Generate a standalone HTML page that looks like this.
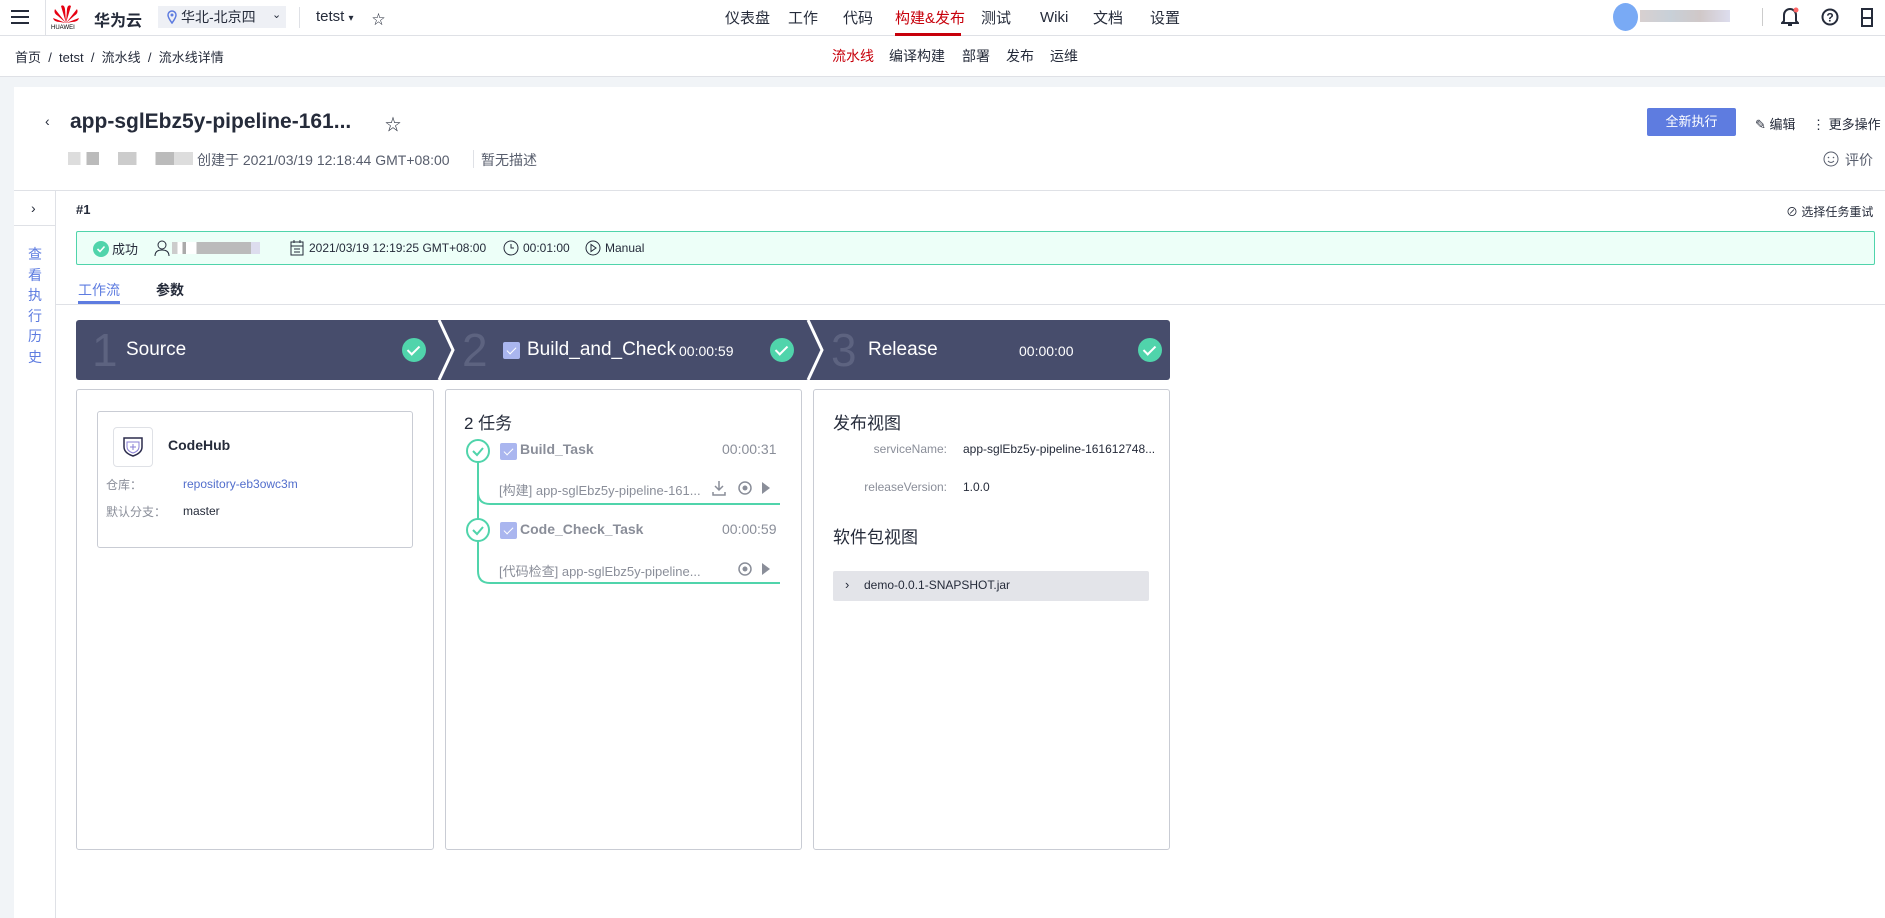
<!DOCTYPE html>
<html><head><meta charset="utf-8"><style>
*{margin:0;padding:0;box-sizing:border-box}
body{width:1885px;height:918px;overflow:hidden;background:#fff;font-family:"Liberation Sans","Noto Sans CJK SC",sans-serif;font-size:14px;color:#252b3a;position:relative}
.a{position:absolute;white-space:nowrap}
.nav{font-size:15px;color:#252b3a}
.chk{position:absolute;width:24px;height:24px;border-radius:50%;background:#50d4ab}
.chk:after{content:"";position:absolute;left:8px;top:5px;width:5px;height:10px;border:solid #fff;border-width:0 2px 2px 0;transform:rotate(45deg)}
.cb{position:absolute;width:17px;height:17px;border-radius:2px;background:#aab6ef}
.cb:after{content:"";position:absolute;left:6px;top:3px;width:4px;height:8px;border:solid #fff;border-width:0 1.5px 1.5px 0;transform:rotate(45deg)}
.panel{position:absolute;top:389px;height:461px;border:1px solid #c9ccd4;border-radius:3px;background:#fff}
.g{color:#8a8e99}
</style></head><body>
<div class="a" style="left:0;top:0;width:1885px;height:36px;border-bottom:1px solid #dfe1e6"></div>
<svg class="a" style="left:11px;top:9px" width="18" height="16"><path d="M0 2h18M0 8h18M0 14h18" stroke="#252b3a" stroke-width="2"/></svg>
<div class="a" style="left:45px;top:0;width:1px;height:36px;background:#dfe1e6"></div>
<svg class="a" style="left:52px;top:3px" width="28" height="22"><g fill="#e60012"><path d="M14 20 L9 3 Q12 1 13 6Z"/><path d="M14 20 L19 3 Q16 1 15 6Z"/><path d="M14 20 L3 6 Q1 10 6 13Z"/><path d="M14 20 L25 6 Q27 10 22 13Z"/><path d="M14 20 L1 15 Q2 19 8 19Z"/><path d="M14 20 L27 15 Q26 19 20 19Z"/></g></svg>
<div class="a" style="left:51px;top:25px;font-size:6px;color:#000">HUAWEI</div>
<div class="a" style="left:94px;top:7px;font-size:16px;font-weight:bold">华为云</div>
<div class="a" style="left:158px;top:6px;width:128px;height:22px;background:#eef0f5"></div>
<svg class="a" style="left:167px;top:10px" width="10" height="14"><path d="M5 13C2 9 1 7 1 5a4 4 0 0 1 8 0c0 2-1 4-4 8z" fill="none" stroke="#5e7ce0" stroke-width="1.5"/><circle cx="5" cy="5" r="1.5" fill="#5e7ce0"/></svg>
<div class="a" style="left:181px;top:7px;font-size:14px">华北-北京四</div>
<div class="a" style="left:272px;top:8px;font-size:11px">⌄</div>
<div class="a" style="left:299px;top:7px;width:1px;height:21px;background:#dfe1e6"></div>
<div class="a" style="left:316px;top:8px;font-size:15px">tetst <span style="font-size:10px">▾</span></div>
<div class="a" style="left:372px;top:9px;font-size:13px">☆</div>
<div class="a nav" style="left:725px;top:7px">仪表盘</div>
<div class="a nav" style="left:788px;top:7px">工作</div>
<div class="a nav" style="left:843px;top:7px">代码</div>
<div class="a nav" style="left:895px;top:7px;color:#c7000b">构建&amp;发布</div>
<div class="a" style="left:895px;top:33px;width:66px;height:3px;background:#c7000b"></div>
<div class="a nav" style="left:981px;top:7px">测试</div>
<div class="a nav" style="left:1040px;top:9px">Wiki</div>
<div class="a nav" style="left:1093px;top:7px">文档</div>
<div class="a nav" style="left:1150px;top:7px">设置</div>
<div class="a" style="left:1613px;top:3px;width:25px;height:28px;border-radius:50%;background:#79aaf5"></div>
<div class="a" style="left:1640px;top:10px;width:90px;height:12px;background:linear-gradient(90deg,#d8d0d0,#c8d0d8,#d0c8c8,#dde)"></div>
<div class="a" style="left:1762px;top:8px;width:1px;height:18px;background:#ccc"></div>
<svg class="a" style="left:1781px;top:7px" width="18" height="20"><path d="M3 14V8a6 6 0 0 1 12 0v6l2 2H1z" fill="none" stroke="#252b3a" stroke-width="2"/><path d="M7 18h4" stroke="#252b3a" stroke-width="2"/><circle cx="15" cy="3" r="2.5" fill="#f66"/></svg>
<svg class="a" style="left:1821px;top:8px" width="18" height="18"><circle cx="9" cy="9" r="7.5" fill="none" stroke="#252b3a" stroke-width="2"/><text x="9" y="13.5" font-size="12" font-weight="bold" text-anchor="middle" fill="#252b3a" font-family="Liberation Sans">?</text></svg>
<svg class="a" style="left:1861px;top:8px" width="12" height="19"><rect x="1" y="1" width="10" height="17" fill="none" stroke="#252b3a" stroke-width="2"/><path d="M1 10h10" stroke="#252b3a" stroke-width="2"/></svg>
<div class="a" style="left:0;top:76px;width:1885px;height:1px;background:#dfe1e6"></div>
<div class="a" style="left:15px;top:47px;font-size:13px">首页 &nbsp;/&nbsp; tetst &nbsp;/&nbsp; 流水线 &nbsp;/&nbsp; 流水线详情</div>
<div class="a nav" style="left:832px;top:46px;color:#c7000b;font-size:14px">流水线</div>
<div class="a nav" style="left:889px;top:46px;font-size:14px">编译构建</div>
<div class="a nav" style="left:962px;top:46px;font-size:14px">部署</div>
<div class="a nav" style="left:1006px;top:46px;font-size:14px">发布</div>
<div class="a nav" style="left:1050px;top:46px;font-size:14px">运维</div>
<div class="a" style="left:0;top:77px;width:1885px;height:10px;background:#f1f4f7"></div>
<div class="a" style="left:0;top:87px;width:14px;height:831px;background:#f1f4f7"></div>
<div class="a" style="left:45px;top:113px;font-size:14px">‹</div>
<div class="a" style="left:70px;top:110px;font-size:21px;font-weight:bold">app-sglEbz5y-pipeline-161...</div>
<div class="a" style="left:385px;top:111px;font-size:16px">☆</div>
<div class="a" style="left:68px;top:152px;width:125px;height:13px;background:linear-gradient(90deg,#ddd 0 10%,#fff 10% 15%,#bbb 15% 25%,#fff 25% 40%,#ccc 40% 55%,#fff 55% 70%,#bbb 70% 85%,#ddd 85%)"></div>
<div class="a" style="left:197px;top:150px;font-size:14px;color:#575d6c">创建于 2021/03/19 12:18:44 GMT+08:00</div>
<div class="a" style="left:473px;top:150px;width:1px;height:18px;background:#dfe1e6"></div>
<div class="a" style="left:481px;top:150px;font-size:14px;color:#575d6c">暂无描述</div>
<div class="a" style="left:1647px;top:108px;width:89px;height:28px;background:#5e7ce0;border-radius:2px;color:#fff;font-size:13px;text-align:center;line-height:28px">全新执行</div>
<div class="a" style="left:1755px;top:114px;font-size:13px">✎ 编辑</div>
<div class="a" style="left:1812px;top:114px;font-size:13px">⋮ 更多操作</div>
<svg class="a" style="left:1823px;top:151px" width="16" height="16"><circle cx="8" cy="8" r="7" fill="none" stroke="#575d6c"/><circle cx="5.5" cy="6.5" r=".8" fill="#575d6c"/><circle cx="10.5" cy="6.5" r=".8" fill="#575d6c"/><path d="M5 10q3 3 6 0" fill="none" stroke="#575d6c"/></svg>
<div class="a" style="left:1845px;top:150px;font-size:14px;color:#575d6c">评价</div>
<div class="a" style="left:14px;top:190px;width:1871px;height:1px;background:#dfe1e6"></div>
<div class="a" style="left:55px;top:191px;width:1px;height:727px;background:#dfe1e6"></div>
<div class="a" style="left:31px;top:200px;font-size:14px">›</div>
<div class="a" style="left:14px;top:225px;width:41px;height:1px;background:#dfe1e6"></div>
<div class="a" style="left:28px;top:244px;width:16px;font-size:14px;color:#5e7ce0;line-height:20.6px;white-space:normal">查看执行历史</div>
<div class="a" style="left:76px;top:202px;font-size:13px;font-weight:bold">#1</div>
<div class="a" style="left:1786px;top:203px;font-size:12px">⊘ 选择任务重试</div>
<div class="a" style="left:76px;top:231px;width:1799px;height:34px;background:#edfff8;border:1px solid #50d4ab;border-radius:2px"></div>
<svg class="a" style="left:93px;top:241px" width="16" height="16"><circle cx="8" cy="8" r="8" fill="#50d4ab"/><path d="M4.5 8l2.5 2.5 4.5-5" fill="none" stroke="#fff" stroke-width="1.6"/></svg>
<div class="a" style="left:112px;top:239px;font-size:13px">成功</div>
<svg class="a" style="left:154px;top:240px" width="16" height="16"><circle cx="8" cy="5" r="4" fill="none" stroke="#252b3a"/><path d="M1 16q0-6 7-6t7 6" fill="none" stroke="#252b3a"/></svg>
<div class="a" style="left:172px;top:242px;width:88px;height:12px;background:linear-gradient(90deg,#ccc 0 6%,#fff 6% 12%,#aaa 12% 16%,#fff 16% 28%,#bbb 28% 90%,#dde 90%)"></div>
<svg class="a" style="left:290px;top:240px" width="14" height="16"><rect x="1" y="2" width="12" height="13" fill="none" stroke="#252b3a"/><path d="M1 6h12M4 0v3M10 0v3M4 9h6M4 12h6" stroke="#252b3a"/></svg>
<div class="a" style="left:309px;top:241px;font-size:12px">2021/03/19 12:19:25 GMT+08:00</div>
<svg class="a" style="left:503px;top:240px" width="16" height="16"><circle cx="8" cy="8" r="7" fill="none" stroke="#252b3a"/><path d="M8 4v4h3" fill="none" stroke="#252b3a"/></svg>
<div class="a" style="left:523px;top:241px;font-size:12px">00:01:00</div>
<svg class="a" style="left:585px;top:240px" width="16" height="16"><circle cx="8" cy="8" r="7" fill="none" stroke="#252b3a"/><path d="M6 4.5v7l5-3.5z" fill="none" stroke="#252b3a"/></svg>
<div class="a" style="left:605px;top:241px;font-size:12px">Manual</div>
<div class="a" style="left:78px;top:280px;font-size:14px;color:#5e7ce0">工作流</div>
<div class="a" style="left:78px;top:301px;width:42px;height:3px;background:#5e7ce0"></div>
<div class="a" style="left:156px;top:280px;font-size:14px;font-weight:bold">参数</div>
<div class="a" style="left:56px;top:304px;width:1829px;height:1px;background:#dfe1e6"></div>
<svg class="a" style="left:76px;top:320px" width="1094" height="60"><rect width="1094" height="60" rx="3" fill="#474d6c"/><path d="M363 0l14 30-14 30M732 0l14 30-14 30" fill="none" stroke="#fff" stroke-width="3"/></svg>
<div class="a" style="left:92px;top:324px;font-size:46px;color:#5d6380;line-height:52px">1</div>
<div class="a" style="left:126px;top:339px;font-size:19px;color:#fff">Source</div>
<div class="chk" style="left:402px;top:338px"></div>
<div class="a" style="left:462px;top:324px;font-size:46px;color:#5d6380;line-height:52px">2</div>
<div class="cb" style="left:503px;top:342px"></div>
<div class="a" style="left:527px;top:339px;font-size:19px;color:#fff">Build_and_Check</div>
<div class="a" style="left:679px;top:343px;font-size:14px;color:#fff">00:00:59</div>
<div class="chk" style="left:770px;top:338px"></div>
<div class="a" style="left:831px;top:324px;font-size:46px;color:#5d6380;line-height:52px">3</div>
<div class="a" style="left:868px;top:339px;font-size:19px;color:#fff">Release</div>
<div class="a" style="left:1019px;top:343px;font-size:14px;color:#fff">00:00:00</div>
<div class="chk" style="left:1138px;top:338px"></div>
<div class="panel" style="left:76px;width:358px"></div>
<div class="panel" style="left:445px;width:357px"></div>
<div class="panel" style="left:813px;width:357px"></div>
<div class="a" style="left:97px;top:411px;width:316px;height:137px;border:1px solid #c9ccd4;border-radius:3px"></div>
<div class="a" style="left:113px;top:427px;width:40px;height:40px;border:1px solid #dfe1e6;border-radius:4px"></div>
<svg class="a" style="left:122px;top:436px" width="22" height="22"><path d="M2 2h18v9q0 6-9 9q-9-3-9-9z" fill="none" stroke="#2b2b4c" stroke-width="1.5"/><path d="M5 6h12v5q0 4-6 6q-6-2-6-6z" fill="none" stroke="#8a7fd6"/><path d="M11 8v6M8 11h6" stroke="#8a7fd6"/></svg>
<div class="a" style="left:168px;top:437px;font-size:14px;font-weight:bold">CodeHub</div>
<div class="a g" style="left:106px;top:476px;font-size:12px">仓库：</div>
<div class="a" style="left:183px;top:477px;font-size:12px;color:#526ecc">repository-eb3owc3m</div>
<div class="a g" style="left:106px;top:503px;font-size:12px">默认分支：</div>
<div class="a" style="left:183px;top:504px;font-size:12px">master</div>
<div class="a" style="left:464px;top:409px;font-size:17px">2 任务</div>
<svg class="a" style="left:465px;top:438px" width="315" height="150"><g fill="none" stroke="#50d4ab" stroke-width="2"><circle cx="13" cy="13" r="11"/><circle cx="13" cy="92" r="11"/><path d="M13 24v57"/><path d="M13 24v30q0 12 12 12h290"/><path d="M13 103v30q0 12 12 12h290"/><path d="M8 13l4 4 6-7M8 92l4 4 6-7"/></g></svg>
<div class="cb" style="left:500px;top:443px"></div>
<div class="a g" style="left:520px;top:441px;font-size:14px;font-weight:bold">Build_Task</div>
<div class="a g" style="left:722px;top:441px;font-size:14px">00:00:31</div>
<div class="a g" style="left:499px;top:480px;font-size:13px">[构建] app-sglEbz5y-pipeline-161...</div>
<svg class="a" style="left:712px;top:480px" width="68" height="16"><g fill="none" stroke="#8a8e99" stroke-width="1.5"><path d="M7 1v9M3 6l4 4 4-4M1 12v3h12v-3"/><circle cx="33" cy="8" r="6"/></g><circle cx="33" cy="8" r="2.5" fill="#8a8e99"/><path d="M50 2l8 6-8 6z" fill="#8a8e99"/></svg>
<div class="cb" style="left:500px;top:522px"></div>
<div class="a g" style="left:520px;top:521px;font-size:14px;font-weight:bold">Code_Check_Task</div>
<div class="a g" style="left:722px;top:521px;font-size:14px">00:00:59</div>
<div class="a g" style="left:499px;top:561px;font-size:13px">[代码检查] app-sglEbz5y-pipeline...</div>
<svg class="a" style="left:736px;top:561px" width="44" height="16"><circle cx="9" cy="8" r="6" fill="none" stroke="#8a8e99" stroke-width="1.5"/><circle cx="9" cy="8" r="2.5" fill="#8a8e99"/><path d="M26 2l8 6-8 6z" fill="#8a8e99"/></svg>
<div class="a" style="left:833px;top:409px;font-size:17px">发布视图</div>
<div class="a g" style="left:849px;top:442px;width:98px;text-align:right;font-size:12px">serviceName:</div>
<div class="a" style="left:963px;top:442px;font-size:12px">app-sglEbz5y-pipeline-161612748...</div>
<div class="a g" style="left:849px;top:480px;width:98px;text-align:right;font-size:12px">releaseVersion:</div>
<div class="a" style="left:963px;top:480px;font-size:12px">1.0.0</div>
<div class="a" style="left:833px;top:523px;font-size:17px">软件包视图</div>
<div class="a" style="left:833px;top:571px;width:316px;height:30px;background:#e3e4e9;border-radius:2px"></div>
<div class="a" style="left:845px;top:577px;font-size:13px">›</div>
<div class="a" style="left:864px;top:578px;font-size:12px">demo-0.0.1-SNAPSHOT.jar</div>
</body></html>
